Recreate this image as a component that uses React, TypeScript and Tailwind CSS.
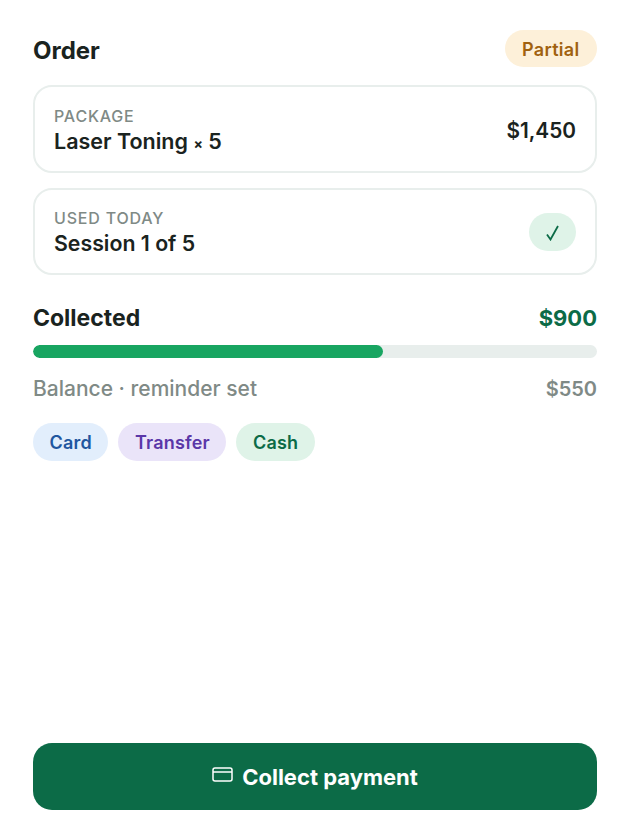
function Tag({ label, className }: { label: string; className: string }) {
  return (
    <span className={`h-[38px] px-[16.5px] pt-[1px] flex items-center rounded-full text-[18px] font-semibold tracking-[0.2px] ${className}`}>
      {label}
    </span>
  )
}

export default function App() {
  return (
    <div className="w-[630px] h-[840px] bg-white flex flex-col px-[33px] pt-[30px] pb-[30px] font-['Inter',sans-serif] text-[#1a2320]">
      <div className="flex items-center justify-between h-[37px]">
        <h2 className="text-[24px] font-bold pt-[5px]">Order</h2>
        <span className="h-[37px] px-[17.5px] pt-[1px] flex items-center rounded-full bg-[#fdf0d9] text-[#a0610f] text-[18px] font-semibold tracking-[0.3px]">
          Partial
        </span>
      </div>

      {/* Cards */}
      <div className="mt-[18px] h-[88px] rounded-[19px] border-2 border-[#e8eeec] px-[19px] flex items-center justify-between">
        <div className="pt-[7px]">
          <p className="text-[16px] leading-[20px] font-medium tracking-[0.8px] text-[#7f8a86]">PACKAGE</p>
          <p className="text-[21.5px] leading-[30px] font-semibold">
            Laser Toning <span className="text-[14px] font-bold">×</span> 5
          </p>
        </div>
        <span className="text-[20.8px] font-semibold pt-[4px]">$1,450</span>
      </div>
      <div className="mt-[15px] h-[87px] rounded-[19px] border-2 border-[#e8eeec] px-[19px] flex items-center justify-between">
        <div className="pt-[3px]">
          <p className="text-[16px] leading-[20px] font-medium tracking-[0.8px] text-[#7f8a86]">USED TODAY</p>
          <p className="text-[21.3px] leading-[30px] font-semibold">Session 1 of 5</p>
        </div>
        <span className="w-[47px] h-[38px] rounded-full bg-[#dff3e8] flex items-center justify-center text-[#0c6b47]">
          <svg className="mt-[2px]" width="13" height="16" viewBox="0 0 13 16" fill="none" stroke="currentColor" strokeWidth="1.8">
            <path d="M1 9.5 4.5 14.5 12 1" />
          </svg>
        </span>
      </div>

      {/* Collected */}
      <div className="mt-[26px] flex items-center justify-between h-[34px]">
        <span className="text-[23px] font-bold">Collected</span>
        <span className="text-[22px] font-bold text-[#0c6b47]">$900</span>
      </div>
      <div className="mt-[10px] h-[13px] rounded-full bg-[#e8eeec] overflow-hidden">
        <div className="h-full w-[62%] rounded-full bg-[#18a561]" />
      </div>
      <div className="mt-[15px] flex items-center justify-between text-[21px] font-medium text-[#7f8a86]">
        <span>Balance · reminder set</span>
        <span className="text-[20px] font-semibold">$550</span>
      </div>
      <div className="mt-[18px] flex gap-[10px]">
        <Tag label="Card" className="bg-[#e2eefc] text-[#21569f]" />
        <Tag label="Transfer" className="bg-[#eae4f9] text-[#5a37a8]" />
        <Tag label="Cash" className="bg-[#dff3e8] text-[#0c6b47]" />
      </div>

      <button className="mt-auto h-[67px] rounded-[19px] bg-[#0c6b47] text-white flex items-center justify-center gap-[9px] text-[22px] font-bold">
        <svg className="mb-[4px]" width="21" height="15" viewBox="0 0 21 15" fill="none" stroke="currentColor" strokeWidth="1.5">
          <rect x="1" y="1" width="19" height="13" rx="2" />
          <path d="M1 5h19" />
        </svg>
        <span className="pt-[2px]">Collect payment</span>
      </button>
    </div>
  )
}
